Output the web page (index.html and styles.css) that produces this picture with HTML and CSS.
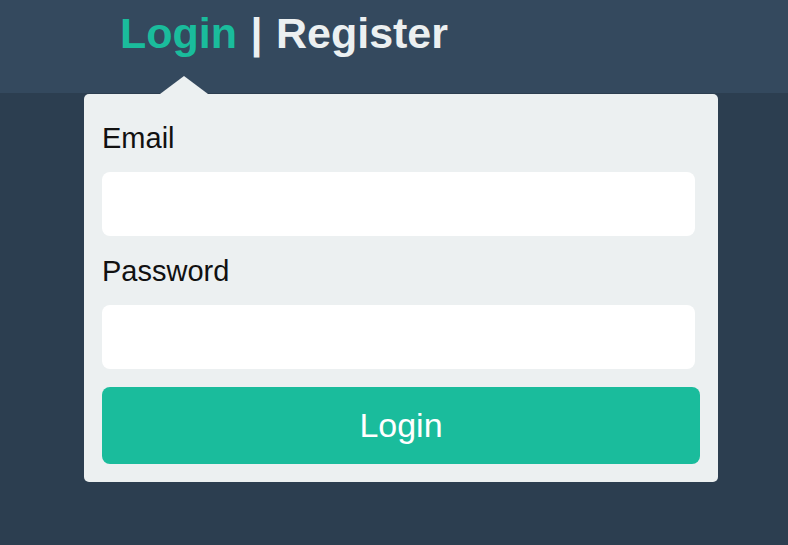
FILE: index.html
```html
<!DOCTYPE html>
<html lang="en">
<head>
  <meta charset="UTF-8" />
  <title>Login</title>
  <link rel="stylesheet" href="styles.css">
</head>
<body>
  <div class="top-bar">
    <div class="wrap">
      <h1 class="tabs"><a href="#" class="tab active">Login</a> | <a href="#" class="tab">Register</a></h1>
    </div>
  </div>
  <div class="wrap">
    <form class="login-card" onsubmit="return false">
      <label for="email">Email</label>
      <input type="email" id="email">
      <label for="password">Password</label>
      <input type="password" id="password">
      <button type="submit">Login</button>
    </form>
  </div>
</body>
</html>
```

FILE: styles.css
```css
body {
  margin: 0;
  background: #2c3e50;
  font-family: "Liberation Sans", Arial, sans-serif;
}
.wrap { margin-left: 84px; width: 634px; }
.top-bar {
  background: #34495e;
  height: 93px;
  box-sizing: border-box;
  padding-top: 9px;
}
.tabs {
  margin: 0;
  padding-left: 36px;
  font-size: 43px;
  line-height: 48px;
  font-weight: bold;
  word-spacing: 1.5px;
  color: #ecf0f1;
}
.tab { color: #ecf0f1; text-decoration: none; }
.tab.active { color: #1abc9c; }
/* card with arrow pointing at the active tab */
.login-card {
  position: relative;
  margin-top: 1px;
  background: #ecf0f1;
  border-radius: 5px;
  padding: 28px 18px 18px 18px;
  display: flex;
  flex-direction: column;
}
.login-card::before {
  content: "";
  position: absolute;
  top: -18px;
  left: 76px;
  border-left: 24px solid transparent;
  border-right: 24px solid transparent;
  border-bottom: 18px solid #ecf0f1;
}
label {
  font-size: 29px;
  line-height: 32px;
  color: #111;
  margin-bottom: 18px;
}
input {
  height: 64px;
  width: 593px;
  box-sizing: border-box;
  border: none;
  border-radius: 8px;
  background: #fff;
  margin-bottom: 19px;
  font-size: 20px;
  padding: 0 14px;
  outline: none;
}
#password { margin-bottom: 18px; }
button {
  height: 77px;
  border: none;
  border-radius: 8px;
  background: #1abc9c;
  color: #fff;
  font-family: inherit;
  font-size: 34px;
  cursor: pointer;
}
```
